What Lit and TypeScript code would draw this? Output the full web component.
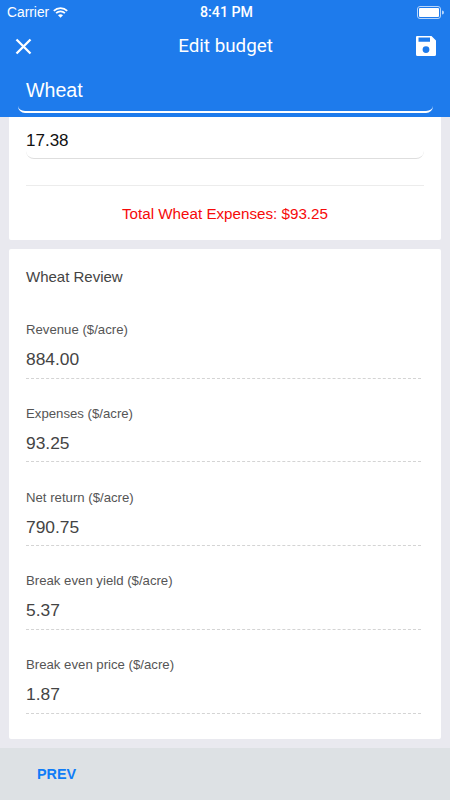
import { LitElement, html, css } from "lit";
import { customElement } from "lit/decorators.js";

const rows = [
  ["Revenue ($/acre)", "884.00"],
  ["Expenses ($/acre)", "93.25"],
  ["Net return ($/acre)", "790.75"],
  ["Break even yield ($/acre)", "5.37"],
  ["Break even price ($/acre)", "1.87"],
];

@customElement("app-root")
export class AppRoot extends LitElement {
  static styles = css`
    :host {
      display: flex;
      flex-direction: column;
      width: 450px;
      height: 800px;
      overflow: hidden;
      background: #e9e9ef;
      font-family: "Liberation Sans", Arial, sans-serif;
    }
    .top {
      background: #1e7bec;
      color: #fff;
      height: 117px;
      flex: none;
      display: flex;
      flex-direction: column;
      box-sizing: border-box;
    }
    .status {
      height: 24px;
      flex: none;
      display: grid;
      grid-template-columns: 1fr auto 1fr;
      align-items: center;
      padding: 0 6px 0 7px;
      font-size: 13.8px;
    }
    .status .left {
      display: flex;
      align-items: center;
      gap: 4px;
    }
    .status .time {
      font-family: Roboto, sans-serif;
      font-weight: 500;
      font-size: 14.2px;
      margin-left: 2px;
    }
    .status .right {
      display: flex;
      justify-content: flex-end;
    }
    .nav {
      height: 44px;
      flex: none;
      display: grid;
      grid-template-columns: 1fr auto 1fr;
      align-items: center;
      padding: 0 13px 0 14px;
    }
    .nav .title {
      font-family: Roboto, sans-serif;
      font-size: 18.8px;
      line-height: 44px;
    }
    .nav .save {
      justify-self: end;
    }
    .nav svg {
      display: block;
    }
    .search {
      margin: 1px 17px 0 18px;
      height: 44px;
      box-sizing: border-box;
      border-bottom: 2px solid #fff;
      border-radius: 0 0 7px 7px;
      padding-left: 8px;
      font-size: 19.6px;
      line-height: 43px;
    }
    .scroll {
      flex: 1;
      min-height: 0;
      padding: 0 9px 9px;
      display: flex;
      flex-direction: column;
      gap: 9px;
    }
    .card {
      background: #fff;
      border-radius: 2px;
    }
    .expenses {
      height: 123px;
      box-sizing: border-box;
      padding: 0 17px 0;
      border-radius: 0 0 2px 2px;
    }
    .input {
      height: 42px;
      box-sizing: border-box;
      border-bottom: 1.5px solid #dedede;
      border-radius: 0 0 8px 8px;
      font-size: 17px;
      line-height: 47px;
      color: #111;
    }
    .rule {
      height: 1px;
      background: #ececec;
      margin-top: 26px;
    }
    .total {
      color: #f60a0a;
      text-align: center;
      font-size: 15.2px;
      line-height: 18px;
      margin-top: 19px;
    }
    .review {
      height: 490px;
      box-sizing: border-box;
      padding: 19px 17px 0;
    }
    .review h2 {
      margin: 0 0 24px;
      font-weight: 400;
      font-size: 15px;
      line-height: 18px;
      color: #444;
    }
    .row {
      height: 83.8px;
      box-sizing: border-box;
      padding-top: 11px;
    }
    .row label {
      display: block;
      font-size: 13.2px;
      line-height: 18px;
      color: #555;
    }
    .row .val {
      height: 39.6px;
      box-sizing: border-box;
      margin-right: 3px;
      border-bottom: 1px dashed #d4d4d4;
      font-size: 17.4px;
      line-height: 40px;
      color: #444;
    }
    .foot {
      height: 52px;
      flex: none;
      background: #dde1e4;
      padding-left: 37px;
      display: flex;
      align-items: center;
      font-size: 14.4px;
      font-weight: 700;
      color: #0f7cf7;
    }
  `;

  render() {
    return html`
      <div class="top">
        <div class="status">
          <div class="left">
            <span>Carrier</span>
            <svg width="15" height="11" viewBox="0 0 15 11" fill="none" stroke="#fff" stroke-width="1.7">
              <path d="M0.8 3.9 A9.4 9.4 0 0 1 14.2 3.9" />
              <path d="M3.1 6.2 A6.1 6.1 0 0 1 11.9 6.2" />
              <path d="M7.5 10.8 L5 8.3 A3.4 3.4 0 0 1 10 8.3 Z" fill="#fff" stroke="none" />
            </svg>
          </div>
          <div class="time">8:41 PM</div>
          <div class="right">
            <svg width="27" height="13" viewBox="0 0 27 13">
              <rect x="0.5" y="0.5" width="23" height="12" rx="2.5" fill="none" stroke="#b9d6fa" />
              <rect x="2" y="2" width="20" height="9" rx="1" fill="#fff" />
              <path d="M25 4.5 a2 2 0 0 1 0 4 z" fill="#b9d6fa" />
            </svg>
          </div>
        </div>
        <div class="nav">
          <svg width="19" height="19" viewBox="0 0 19 19" stroke="#fff" stroke-width="2.3" fill="none">
            <path d="M2.5 2.500 L16.5 16.500 M16.5 2.500 L2.5 16.500" />
          </svg>
          <div class="title">Edit budget</div>
          <svg class="save" width="22" height="22" viewBox="0 0 22 22">
            <path
              fill="#fff"
              fill-rule="evenodd"
              d="M2 1 H16.5 L21 5.500 V19.500 A1.500 1.500 0 0 1 19.500 21 H2.500 A1.500 1.500 0 0 1 1 19.500 V2 A1 1 0 0 1 2 1 Z M3.500 2.500 V6.700 H15 V2.500 Z M11 11.200 A3.400 3.400 0 1 0 11.001 18 A3.400 3.400 0 1 0 11 11.200 Z"
            />
          </svg>
        </div>
        <div class="search">Wheat</div>
      </div>
      <div class="scroll">
        <div class="card expenses">
          <div class="input">17.38</div>
          <div class="rule"></div>
          <div class="total">Total Wheat Expenses: $93.25</div>
        </div>
        <div class="card review">
          <h2>Wheat Review</h2>
          ${rows.map(
            ([l, v]) => html`<div class="row">
              <label>${l}</label>
              <div class="val">${v}</div>
            </div>`
          )}
        </div>
      </div>
      <div class="foot">PREV</div>
    `;
  }
}
